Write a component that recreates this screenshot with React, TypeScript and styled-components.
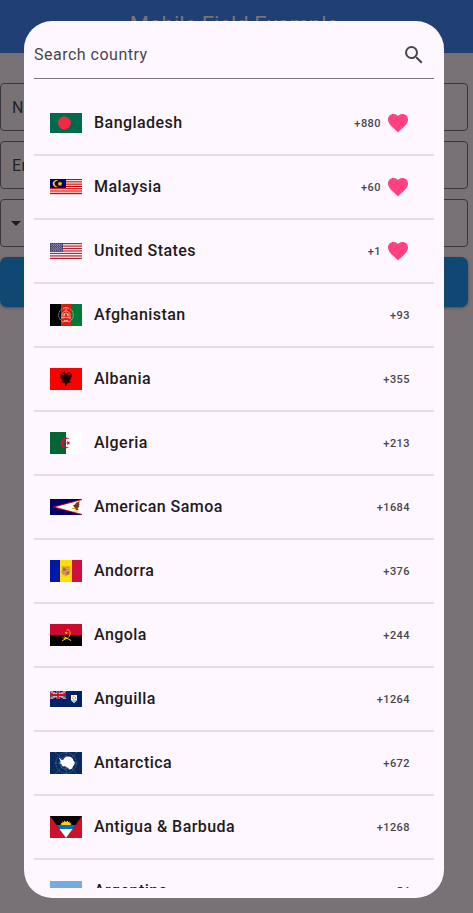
import React from "react";
import styled, { createGlobalStyle } from "styled-components";

const GlobalStyle = createGlobalStyle`
  * { box-sizing: border-box; }
  html, body { margin: 0; padding: 0; overflow: hidden; }
  body { font-family: Roboto, "Liberation Sans", sans-serif; background: #787276; }
`;

const Screen = styled.div`
  position: relative;
  width: 473px;
  height: 913px;
  overflow: hidden;
  background: #787276;
`;

const AppBar = styled.header`
  display: flex;
  justify-content: center;
  height: 53px;
  padding: 12px 5px 0 0;
  background: #203f75;
  color: #797571;
  font-size: 22px;
  line-height: 26px;
  white-space: nowrap;
`;

const Form = styled.main`
  display: flex;
  flex-direction: column;
  gap: 10px;
  width: 468px;
  padding-top: 30px;
`;

const Field = styled.div<{ $inset: number }>`
  display: flex;
  align-items: center;
  height: 48px;
  padding-left: ${(p) => p.$inset}px;
  border: 1px solid #3a363b;
  border-radius: 4px;
  color: #252227;
  font-size: 16px;
  letter-spacing: 0.5px;
`;

const Submit = styled.div`
  height: 50px;
  border-radius: 7px;
  background: #0f4873;
  box-shadow: 0 1px 3px rgba(0, 0, 0, 0.35);
`;

const Dialog = styled.section`
  position: absolute;
  left: 24px;
  top: 21px;
  width: 420px;
  height: 877px;
  padding: 10px;
  display: flex;
  flex-direction: column;
  border-radius: 28px;
  background: #fef7ff;
`;

const SearchBar = styled.div`
  flex: none;
  display: flex;
  align-items: center;
  justify-content: space-between;
  height: 48px;
  padding-right: 8px;
  border-bottom: 1px solid #79747e;
  color: #49454f;
  font-size: 16px;
  letter-spacing: 0.5px;
`;

const List = styled.ul`
  flex: 1;
  min-height: 0;
  margin: 13px 0 0;
  padding: 0;
  list-style: none;
  overflow: hidden;
`;

const Row = styled.li`
  display: flex;
  align-items: center;
  height: 64px;
  padding: 0 24px 0 16px;
  border-bottom: 2px solid #e2dce4;
`;

const FlagSvg = styled.svg`
  display: block;
  flex: none;
  margin-right: 12px;
`;

const Name = styled.span`
  flex: 1;
  color: #1d1b20;
  font-size: 16px;
  font-weight: 500;
  line-height: 24px;
  letter-spacing: 0.45px;
  white-space: nowrap;
`;

const Code = styled.span`
  padding-top: 2px;
  color: #49454f;
  font-size: 11px;
  font-weight: 500;
  line-height: 16px;
  letter-spacing: 0.45px;
`;

const HeartIcon = styled.svg`
  display: block;
  margin-left: 5px;
`;

const Heart = () => (
  <HeartIcon width="24" height="24" viewBox="0 0 24 24" fill="#ff4081">
    <path d="M12 21.35l-1.45-1.32C5.4 15.36 2 12.28 2 8.5 2 5.42 4.42 3 7.5 3c1.74 0 3.41.81 4.5 2.09C13.09 3.81 14.76 3 16.5 3 19.58 3 22 5.42 22 8.5c0 3.78-3.4 6.86-8.55 11.54L12 21.35z" />
  </HeartIcon>
);

type FlagArt = { h: number; art: React.ReactNode };

const stripes = (n: number, h: number, color: string) =>
  Array.from({ length: Math.ceil(n / 2) }, (_, i) => (
    <rect key={i} y={(i * 2 * h) / n} width="32" height={h / n} fill={color} />
  ));

const flags: Record<string, FlagArt> = {
  bd: {
    h: 20,
    art: (
      <>
        <rect width="32" height="20" fill="#006a4e" />
        <circle cx="14.4" cy="10" r="6.4" fill="#f42a41" />
      </>
    ),
  },
  my: {
    h: 16,
    art: (
      <>
        <rect width="32" height="15.4" fill="#fff" />
        {stripes(14, 16, "#cc0000")}
        <rect y="15" width="32" height="1" fill="#fef7ff" />
        <rect y="14.3" width="32" height="0.9" fill="#cc0000" />
        <rect width="16" height="9" fill="#000066" />
        <path d="M8.4 2A3.4 3.4 0 1 0 8.4 7.2A2.8 2.8 0 1 1 8.4 2Z" fill="#ffcc00" />
        <path d="M10 2.6l.6 1 1.2-.4-.3 1.1.7.5-.8.6.2 1-1-.2-.6.7-.7-.8-1.1.2.2-1-.7-.5.8-.6-.2-1 1.1.3z" fill="#ffcc00" />
      </>
    ),
  },
  us: {
    h: 16,
    art: (
      <>
        <rect width="32" height="16" fill="#fff" />
        {stripes(13, 16, "#b22234")}
        <rect width="13" height="8.7" fill="#3c3b6e" />
        {Array.from({ length: 30 }, (_, i) => {
          const r = Math.floor(i / 6);
          return (
            <React.Fragment key={i}>
              <circle cx={1.1 + (i % 6) * 2.15} cy={0.9 + r * 1.7} r="0.48" fill="#dcdbea" />
              {r < 4 && i % 6 < 5 && (
                <circle cx={2.2 + (i % 6) * 2.15} cy={1.75 + r * 1.7} r="0.42" fill="#dcdbea" />
              )}
            </React.Fragment>
          );
        })}
      </>
    ),
  },
  af: {
    h: 22,
    art: (
      <>
        <rect width="11" height="22" fill="#000" />
        <rect x="11" width="11" height="22" fill="#d32011" />
        <rect x="21.3" width="10.7" height="22" fill="#007a36" />
        <g fill="none" stroke="#fff" strokeOpacity=".6" strokeWidth=".9">
          <path d="M12.3 4.5C7.5 8 7.5 14 12 17.2M19.7 4.5C24.5 8 24.5 14 20 17.2" strokeDasharray="1.2 .5" />
          <path d="M13 4.4q3-2 6 0M12 18q4-1.6 8 0M11 14.2q5-1.4 10 0M12 14V9.5q4-5 8 0V14M14 14v-4q2-2 4 0v4M16 4v3M13.8 16.5h4.4" />
        </g>
        <path d="M13.4 9.4h1.8v2.4h-1.8zM16.8 9.4h1.8v2.4h-1.8z" fill="#fff" fillOpacity=".55" />
      </>
    ),
  },
  al: {
    h: 22,
    art: (
      <>
        <rect width="32" height="22" fill="#f00" />
        <path d="M16 7.3L14.6 4.2 12 4.7l.8 1 1.8.8-.7 1.5-3.7-2 .7 2-.9.4 1.5 1-.7.8 1.6.3-1 1.2 2-.2-2.2 3 2.5-1-.2 1.8 1.1-.8L16 18l1.4-3.5 1.1.8-.2-1.8 2.5 1-2.2-3 2 .2-1-1.2 1.6-.3-.7-.8 1.5-1-.9-.4.7-2-3.7 2-.7-1.5 1.8-.8.8-1-2.6-.5z" fill="#180000" stroke="#180000" strokeWidth=".5" />
      </>
    ),
  },
  dz: {
    h: 22,
    art: (
      <>
        <rect width="16" height="22" fill="#006633" />
        <rect x="16" width="16" height="22" fill="#fff" />
        <path d="M19.4 7A5.4 5.4 0 1 0 19.4 15A4.3 4.3 0 1 1 19.4 7Z" fill="#d21034" />
        <path d="M15.5 11l1.8-.6.1-1.8 1.1 1.4 1.7-.5-1 1.5 1 1.5-1.7-.5-1.1 1.4-.1-1.8z" fill="#d21034" />
      </>
    ),
  },
  as: {
    h: 16,
    art: (
      <>
        <rect width="32" height="16" fill="#000066" />
        <path d="M32 0L2 8 32 16z" fill="#bd1021" />
        <path d="M32 1.1L5.5 8 32 14.9z" fill="#fff" />
        <path d="M23 6.3l2-.9 1-1.7 4-1.4-1 2 .7 1-.8.6.4 2-1.8 1.2 1.3 1.3-2.3.8-1.5-1.3-.4-1.5z" fill="#7b3b18" />
        <path d="M21.8 9h3.8v.9h-3.8zM23.5 11.7h5v.9h-5z" fill="#d9a520" />
        <path d="M23.8 6.3h2.2l1.4 1-2.8.2z" fill="#3b2b24" />
      </>
    ),
  },
  ad: {
    h: 22,
    art: (
      <>
        <rect width="10.3" height="22" fill="#0018a8" />
        <rect x="10" width="12" height="22" fill="#fedf00" />
        <rect x="22" width="10" height="22" fill="#d0103a" />
        <path d="M11.8 6.7l2-.8 2.2.8 2.2-.8 2 .8-.5 2 .8 3-1 2.7L16 16l-3.6-1.6-1-2.7.8-3z" fill="#c89a5f" />
        <path d="M13 8h2.5v3H13zM16.5 11.5H19V14l-2.5 1z" fill="#d8514f" />
        <path d="M16.6 8H19v3h-2.4zM13 11.8h2.5v2.7L13 13.5z" fill="#e5b635" />
        <path d="M13 9.4h6M13 12.8h6" stroke="#9f6657" strokeWidth=".6" />
      </>
    ),
  },
  ao: {
    h: 22,
    art: (
      <>
        <rect width="32" height="11" fill="#cc092f" />
        <rect y="11" width="32" height="11" fill="#000" />
        <g fill="none" stroke="#ffcb00">
          <path d="M16.8 5.8C20.5 5 21.2 10.7 18.5 13.4 16.8 15.2 13.8 14.6 12.6 13.5" strokeWidth="1" strokeDasharray="1.8 .4" />
          <path d="M14.2 12.8l7 3.8M12.2 16.7l4.2-2.3" strokeWidth="1" />
        </g>
        <path d="M16.3 7.2l.4 1 1.1-.1-.7.9.4 1.1-1.1-.5-.9.7v-1.1l-1-.6 1.2-.3z" fill="#ffcb00" />
      </>
    ),
  },
  ai: {
    h: 16,
    art: (
      <>
        <rect width="32" height="16" fill="#012169" />
        <path d="M0 0l16 8M16 0L0 8" stroke="#fff" strokeWidth="1.7" />
        <path d="M0 0l16 8M16 0L0 8" stroke="#c8102e" strokeWidth=".8" />
        <path d="M8 0v8M0 4h16" stroke="#fff" strokeWidth="2.7" />
        <path d="M8 0v8M0 4h16" stroke="#c8102e" strokeWidth="1.8" />
        <rect y="8" width="17" height="2" fill="#012169" />
        <path d="M21 4h6v4.2q0 2.4-3 3.8-3-1.4-3-3.8z" fill="#fff" />
        <path d="M21.3 9.2h5.4q-.7 1.6-2.7 2.4-2-.8-2.7-2.4z" fill="#8fc9dc" />
        <path d="M22.4 6q1-1.4 2.2-.5M25.7 6.4q.3 1.6-1 2M22.4 7q.2 1.2 1.3 1.6" stroke="#f59a25" strokeWidth="1" fill="none" />
      </>
    ),
  },
  aq: {
    h: 22,
    art: (
      <>
        <rect width="32" height="22" fill="#072b5f" />
        <g fill="none" stroke="#b6c3d6" strokeOpacity=".55" strokeWidth=".55">
          <circle cx="16" cy="11" r="10.2" strokeDasharray="2 .8" />
          <circle cx="16" cy="11" r="6.2" />
          <path d="M16 0v22M5 11h22M5 0l22 22M27 0L5 22" strokeDasharray="2 1" />
        </g>
        <path d="M9 5.8l1 .2 1.1 1.8 2 .1 1.2-1.9L17 4.5l3.5.2 2.3 2.1.6 1.7 1.3 1.8-.3 2.2-1.5 2-.6 2-2.2 1.1-1.6-.3.3-1.4-2.1-.3-1.2-1.4-2.2.2-1.6-1-.3-1.7-1.5-.3.8-1.5-.7-1.8z" fill="#fff" />
      </>
    ),
  },
  ag: {
    h: 22,
    art: (
      <>
        <rect width="32" height="22" fill="#ce1126" />
        <path d="M0 0h32L16 22z" fill="#000" />
        <path d="M6.5 9h19L22.6 13H9.4z" fill="#0072c6" />
        <path d="M9.4 13h13.2L16 22z" fill="#fff" />
        <path d="M10 9l1.8-.9-1.5-1.4 2.3.2-.6-1.7 1.9 1 .5-1.6L16 6l1.6-1.4.5 1.6 1.9-1-.6 1.7 2.3-.2-1.5 1.4L22 9z" fill="#fcd116" />
      </>
    ),
  },
  ar: {
    h: 20,
    art: (
      <>
        <rect width="32" height="20" fill="#fff" />
        <rect width="32" height="7" fill="#74acdf" />
        <rect y="13" width="32" height="7" fill="#74acdf" />
        <circle cx="16" cy="10" r="1.8" fill="#f6b40e" />
      </>
    ),
  },
};

const Flag = ({ id }: { id: string }) => {
  const { h, art } = flags[id];
  return (
    <FlagSvg width="32" height={h} viewBox={`0 0 32 ${h}`}>
      {art}
    </FlagSvg>
  );
};

const countries: { id: string; name: string; code: string; favorite?: boolean }[] = [
  { id: "bd", name: "Bangladesh", code: "+880", favorite: true },
  { id: "my", name: "Malaysia", code: "+60", favorite: true },
  { id: "us", name: "United States", code: "+1", favorite: true },
  { id: "af", name: "Afghanistan", code: "+93" },
  { id: "al", name: "Albania", code: "+355" },
  { id: "dz", name: "Algeria", code: "+213" },
  { id: "as", name: "American Samoa", code: "+1684" },
  { id: "ad", name: "Andorra", code: "+376" },
  { id: "ao", name: "Angola", code: "+244" },
  { id: "ai", name: "Anguilla", code: "+1264" },
  { id: "aq", name: "Antarctica", code: "+672" },
  { id: "ag", name: "Antigua & Barbuda", code: "+1268" },
  { id: "ar", name: "Argentina", code: "+54" },
];

export default function App() {
  return (
    <>
      <GlobalStyle />
      <Screen>
        <AppBar>Mobile Field Example</AppBar>
        <Form>
          <Field $inset={11}>Name</Field>
          <Field $inset={11}>Email</Field>
          <Field $inset={3}>
            <svg width="24" height="24" viewBox="0 0 24 24" fill="#1f1c20">
              <path d="M7 10l5 5 5-5z" />
            </svg>
          </Field>
          <Submit />
        </Form>
        <Dialog>
          <SearchBar>
            <span>Search country</span>
            <svg width="24" height="24" viewBox="0 0 24 24" fill="#49454f">
              <path d="M15.5 14h-.79l-.28-.27A6.471 6.471 0 0 0 16 9.5 6.5 6.5 0 1 0 9.5 16c1.61 0 3.09-.59 4.23-1.57l.27.28v.79l5 4.99L20.49 19l-4.99-5zm-6 0C7.01 14 5 11.99 5 9.5S7.01 5 9.5 5 14 7.01 14 9.5 11.99 14 9.5 14z" />
            </svg>
          </SearchBar>
          <List>
            {countries.map((c) => (
              <Row key={c.id}>
                <Flag id={c.id} />
                <Name>{c.name}</Name>
                <Code>{c.code}</Code>
                {c.favorite && <Heart />}
              </Row>
            ))}
          </List>
        </Dialog>
      </Screen>
    </>
  );
}
